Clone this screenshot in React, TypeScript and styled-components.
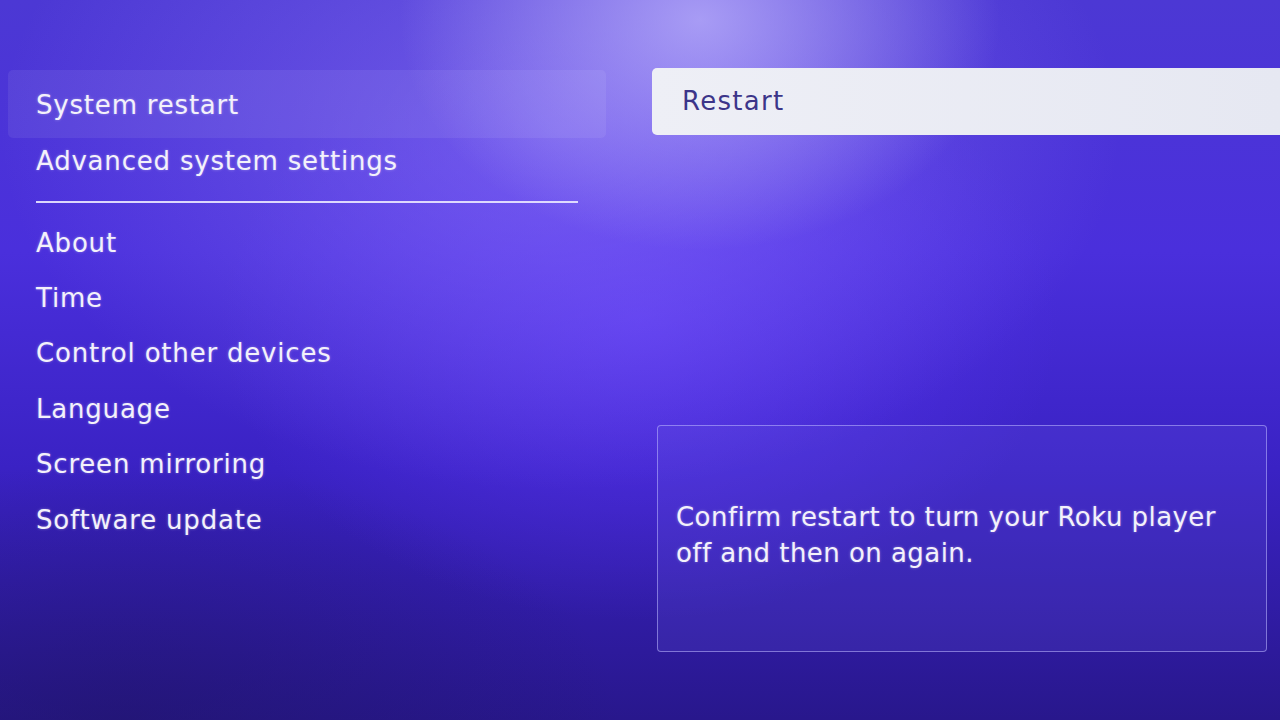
import React from 'react';
import styled, { createGlobalStyle } from 'styled-components';

const GlobalStyle = createGlobalStyle`
  html, body {
    margin: 0;
    padding: 0;
    width: 1280px;
    height: 720px;
    overflow: hidden;
    font-family: 'DejaVu Sans', 'Open Sans', sans-serif;
  }
`;

const menu = [
  'About',
  'Time',
  'Control other devices',
  'Language',
  'Screen mirroring',
  'Software update',
];

const App = () => {
  return (
    <Screen>
      <GlobalStyle />
      <Nav>
        <NavItem selected>System restart</NavItem>
        <NavItem>Advanced system settings</NavItem>
        <Divider />
        {menu.map((label) => (
          <NavItem key={label} compact>
            {label}
          </NavItem>
        ))}
      </Nav>
      <Detail>
        <RestartButton>Restart</RestartButton>
        <InfoBox>
          <InfoText>
            Confirm restart to turn your Roku player
            <br />
            off and then on again.
          </InfoText>
        </InfoBox>
      </Detail>
    </Screen>
  );
};

export default App;

const Screen = styled.div`
  width: 1280px;
  height: 720px;
  display: flex;
  flex-direction: row;
  box-sizing: border-box;
  background:
    radial-gradient(ellipse 300px 230px at 700px 20px, rgba(185, 175, 250, 0.8), rgba(185, 175, 250, 0) 100%),
    radial-gradient(ellipse 560px 360px at 560px 130px, rgba(150, 130, 250, 0.5), rgba(150, 130, 250, 0) 100%),
    radial-gradient(ellipse 420px 300px at 640px 320px, rgba(100, 60, 255, 0.6), rgba(100, 60, 255, 0) 100%),
    radial-gradient(ellipse 500px 260px at 120px 720px, rgba(30, 20, 100, 0.5), rgba(30, 20, 100, 0) 100%),
    linear-gradient(180deg, #4c38d4 0%, #4a2fdc 35%, #3a22c4 65%, #28178c 100%);
`;

const Nav = styled.div`
  width: 598px;
  margin-left: 8px;
  padding-top: 76px;
  display: flex;
  flex-direction: column;
`;

const NavItem = styled.div<{ selected?: boolean; compact?: boolean }>`
  display: flex;
  align-items: center;
  height: ${({ selected, compact }) => (selected ? '68px' : compact ? '55.4px' : '56px')};
  margin: ${({ selected }) => (selected ? '-6px 0' : '0')};
  padding-left: 28px;
  padding-top: 2px;
  box-sizing: border-box;
  border-radius: 5px;
  background: ${({ selected }) => (selected ? 'rgba(255, 255, 255, 0.07)' : 'transparent')};
  color: #f3f1fb;
  font-size: 26px;
  letter-spacing: 0.8px;
  text-shadow: 0 0 3px rgba(255, 255, 255, 0.35);
`;

const Divider = styled.div`
  margin: 13px 0 11px 28px;
  width: 542px;
  height: 2px;
  background: rgba(235, 232, 255, 0.9);
`;

const Detail = styled.div`
  flex: 1;
  margin-left: 46px;
  display: flex;
  flex-direction: column;
`;

const RestartButton = styled.div`
  margin-top: 68px;
  height: 67px;
  display: flex;
  align-items: center;
  padding-left: 30px;
  padding-bottom: 2px;
  box-sizing: border-box;
  border-radius: 5px 0 0 5px;
  background: linear-gradient(90deg, #eeeff6, #e6e8f2);
  color: #3c3589;
  font-size: 26px;
  letter-spacing: 1.3px;
`;

const InfoBox = styled.div`
  margin: 290px 0 0 5px;
  width: 610px;
  height: 227px;
  box-sizing: border-box;
  display: flex;
  align-items: center;
  padding: 0 18px;
  border: 1.5px solid rgba(190, 185, 255, 0.55);
  border-radius: 4px;
  background: rgba(110, 100, 230, 0.16);
`;

const InfoText = styled.div`
  margin-top: -8px;
  color: #f3f1fb;
  font-size: 26px;
  line-height: 36px;
  letter-spacing: 0.45px;
  text-shadow: 0 0 3px rgba(255, 255, 255, 0.35);
`;
